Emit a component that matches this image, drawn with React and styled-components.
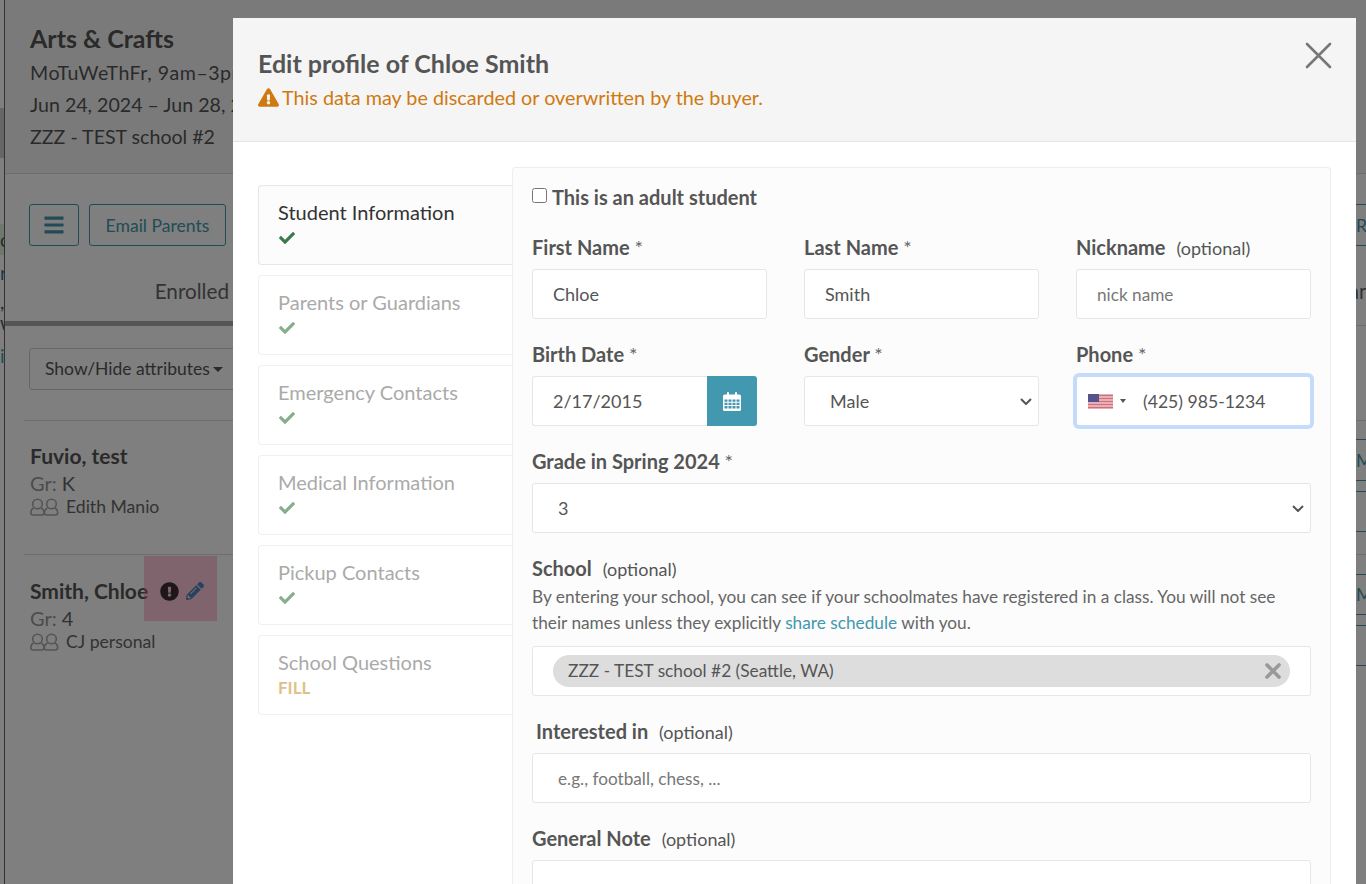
import React from 'react';
import styled, { createGlobalStyle } from 'styled-components';
import { FaBars, FaCheck, FaExclamationCircle, FaExclamationTriangle, FaPencilAlt } from 'react-icons/fa';

const Global = createGlobalStyle`
  html, body { margin: 0; padding: 0; background: #fff; }
  * { box-sizing: border-box; }
  body { font-family: Lato, "Open Sans", sans-serif; color: #555; }
`;

const Viewport = styled.div`
  position: relative;
  width: 1366px;
  height: 884px;
  overflow: hidden;
`;
const Page = styled.div`
  display: flex;
  width: 1440px;
  min-height: 884px;
  background: #fff;
`;
const Strip = styled.div`
  width: 5px;
  flex: none;
  border-right: 1px solid #666;
  display: flex;
  flex-direction: column;
  font-size: 19px;
  line-height: 20px;
  overflow: hidden;
`;
const StripBlock = styled.div`
  height: ${p => p.$h}px;
  background: ${p => p.$bg || 'transparent'};
  color: ${p => p.$color || '#555'};
  overflow: hidden;
  white-space: nowrap;
  display: flex;
  align-items: center;
`;
const Main = styled.div`
  flex: 1;
  min-width: 0;
`;
const CourseHeader = styled.header`
  height: 174px;
  padding: 21px 0 0 25px;
  background: #f5f5f5;
  border-bottom: 1px solid #ddd;
`;
const CourseTitle = styled.h2`
  margin: 0 0 2px;
  font-size: 25px;
  line-height: 34px;
  font-weight: 700;
  color: #555;
`;
const CourseLine = styled.div`
  font-size: 19.6px;
  line-height: 32px;
  letter-spacing: ${p => p.$spacing || 0}px;
  color: #555;
  white-space: nowrap;
`;
const Toolbar = styled.div`
  display: flex;
  gap: 10px;
  margin-top: 30px;
  padding-left: 24px;
`;
const OutlineButton = styled.button`
  height: ${p => p.$h || 42}px;
  width: ${p => p.$w}px;
  padding: ${p => (p.$left ? '0 0 0 15px' : '0')};
  margin-left: ${p => (p.$left ? 'auto' : '0')};
  display: flex;
  align-items: center;
  justify-content: ${p => (p.$left ? 'flex-start' : 'center')};
  background: transparent;
  border: 1px solid #4298ae;
  border-radius: 3px;
  color: #4298ae;
  font: 400 17.6px Lato, sans-serif;
`;
const TabBar = styled.div`
  display: flex;
  height: 56px;
  margin-top: 24px;
  border-bottom: 1px solid #ddd;
  font-size: 20.7px;
  color: #666;
`;
const ActiveTab = styled.div`
  width: 240px;
  height: 56px;
  padding: 9px 16px 0 0;
  text-align: right;
  border-bottom: 5px solid #aaa;
`;
const OtherTab = styled.div`
  margin-left: auto;
  width: 105px;
  padding-top: 9px;
`;
const AttrButton = styled.button`
  display: flex;
  align-items: center;
  gap: 3px;
  width: 230px;
  height: 42px;
  margin: 22px 0 0 24px;
  padding: 0 15px 2px;
  background: #fff;
  border: 1px solid #ccc;
  border-radius: 3px;
  color: #555;
  font: 400 17.5px Lato, sans-serif;
  white-space: nowrap;
`;
const Caret = styled.span`
  display: inline-block;
  margin-top: 2px;
  border-top: 5px solid currentColor;
  border-left: 5px solid transparent;
  border-right: 5px solid transparent;
`;
const StudentList = styled.div`
  margin: 30px 0 0 19px;
`;
const StudentRow = styled.div`
  display: flex;
  justify-content: space-between;
  height: 134px;
  padding: ${p => p.$top}px 0 0 6px;
  border-top: 1px solid #ddd;
`;
const StudentInfo = styled.div`
  position: relative;
`;
const StudentName = styled.div`
  font-size: 21px;
  line-height: 28px;
  font-weight: 700;
  color: #555;
  white-space: nowrap;
`;
const Grade = styled.div`
  font-size: 20px;
  line-height: 26px;
  color: #666;
  span { color: #999; }
`;
const Contact = styled.div`
  display: flex;
  align-items: center;
  gap: 7px;
  font-size: 17.6px;
  line-height: 22px;
  color: #666;
`;
const FlagBadge = styled.div`
  position: absolute;
  left: 114px;
  top: -21px;
  width: 73px;
  height: 65px;
  padding-top: 26px;
  padding-left: 16px;
  display: flex;
  align-items: flex-start;
  gap: 7px;
  background: rgba(255, 100, 150, 0.35);
  color: #3a2c35;
  font-size: 19px;
  svg + svg { color: #4a86b8; font-size: 18px; }
`;
const Actions = styled.div`
  display: flex;
  flex-direction: column;
  gap: 10px;
  margin-top: -3px;
`;

const Overlay = styled.div`
  position: absolute;
  inset: 0;
  background: rgba(0, 0, 0, 0.5);
`;
const Modal = styled.div`
  position: absolute;
  left: 233px;
  top: 18px;
  width: 1123px;
  height: 900px;
  background: #fff;
  overflow: hidden;
`;
const ModalHeader = styled.div`
  position: relative;
  height: 124px;
  padding: 27px 25px 0;
  background: #f5f5f5;
  border-bottom: 1px solid #e5e5e5;
`;
const ModalTitle = styled.h1`
  margin: 0;
  font-size: 25px;
  line-height: 36px;
  font-weight: 700;
  color: #555;
`;
const Warning = styled.div`
  display: flex;
  align-items: center;
  gap: 3px;
  height: 30px;
  margin-top: 1px;
  font-size: 19.8px;
  color: #cf7a10;
  svg { font-size: 21px; flex: none; }
`;
const CloseButton = styled.button`
  position: absolute;
  right: 24px;
  top: 24px;
  width: 27px;
  height: 27px;
  padding: 0;
  border: 0;
  background: none;
  color: #777;
  svg { display: block; }
`;
const ModalBody = styled.div`
  display: flex;
  padding: 25px 25px 0;
`;
const StepNav = styled.nav`
  width: 255px;
  flex: none;
  margin-top: 18px;
  display: flex;
  flex-direction: column;
  gap: 10px;
`;
const Step = styled.div`
  height: 80px;
  padding: 13px 19px 0;
  border: 1px solid ${p => (p.$active ? '#e6e6e6' : '#f0f0f0')};
  border-right: 0;
  border-radius: 4px 0 0 4px;
  background: ${p => (p.$active ? '#fcfcfc' : '#fff')};
`;
const StepTitle = styled.div`
  font-size: 20px;
  line-height: 26px;
  color: ${p => (p.$active ? '#333' : '#aaa')};
  white-space: nowrap;
`;
const StepStatus = styled.div`
  padding-top: 2px;
  font-size: 17px;
  line-height: 22px;
  font-weight: 700;
  color: ${p => (p.$fill ? '#dfc08c' : p.$active ? '#3c7a4d' : '#86ae8c')};
  svg { display: block; margin-top: 3px; margin-left: 1px; }
`;
const FormPanel = styled.form`
  position: relative;
  flex: 1;
  min-width: 0;
  margin-left: -1px;
  padding: 15px 19px 0;
  background: #fcfcfc;
  border: 1px solid #eee;
  border-bottom: 0;
  border-radius: 4px 4px 0 0;
  display: flex;
  flex-direction: column;
  gap: 22px;
`;
const AdultRow = styled.label`
  display: flex;
  align-items: center;
  gap: 5px;
  height: 28px;
  margin-bottom: 1px;
  padding-bottom: 1px;
  font-size: 20px;
  font-weight: 700;
  color: #555;
  input { width: 15px; height: 15px; margin: 0 0 3px; }
`;
const Row3 = styled.div`
  display: grid;
  grid-template-columns: repeat(3, 235px);
  column-gap: 37px;
`;
const Field = styled.div``;
const Label = styled.div`
  height: 28px;
  margin-bottom: ${p => (p.$tight ? 1 : 7)}px;
  padding-left: ${p => (p.$inset ? 4 : 0)}px;
  font-size: 20px;
  line-height: 27px;
  font-weight: 700;
  color: #555;
  white-space: nowrap;
`;
const Req = styled.span`
  font-weight: 400;
  color: #666;
`;
const Optional = styled.span`
  margin-left: 6px;
  font-size: 18px;
  font-weight: 400;
  color: #555;
`;
const boxCss = `
  display: block;
  width: 100%;
  height: 50px;
  background-color: #fff;
  border: 1px solid #e6e6e6;
  border-radius: 3px;
  font: 400 18px Lato, sans-serif;
  color: #555;
  outline: none;
`;
const TextInput = styled.input`
  ${boxCss}
  padding: 0 ${p => p.$pad || 20}px;
  &::placeholder { color: #777; opacity: 1; font-size: 17.2px; }
`;
const chevron = encodeURIComponent(
  '<svg xmlns="http://www.w3.org/2000/svg" width="12" height="7" viewBox="0 0 12 7"><path d="M1 1l5 5 5-5" fill="none" stroke="#555" stroke-width="2"/></svg>'
);
const Select = styled.select`
  ${boxCss}
  appearance: none;
  padding: 0 0 0 ${p => p.$pad}px;
  background-image: url("data:image/svg+xml,${chevron}");
  background-repeat: no-repeat;
  background-position: right 6px center;
`;
const DateGroup = styled.div`
  display: flex;
  width: 225px;
`;
const DateInput = styled(TextInput)`
  border-right: 0;
  border-radius: 3px 0 0 3px;
  flex: 1;
  min-width: 0;
`;
const DateButton = styled.button`
  width: 50px;
  height: 50px;
  flex: none;
  padding: 0;
  border: 0;
  border-radius: 0 3px 3px 0;
  background: #4298ae;
  display: flex;
  align-items: center;
  justify-content: center;
`;
const PhoneBox = styled.div`
  display: flex;
  align-items: center;
  height: 50px;
  padding-left: 11px;
  background: #fff;
  border: 1px solid #c4dbfb;
  border-radius: 3px;
  box-shadow: 0 0 0 3px #c4dbfb;
  svg { display: block; flex: none; }
`;
const PhoneCaret = styled.span`
  margin-left: 7px;
  flex: none;
  border-top: 4px solid #555;
  border-left: 3px solid transparent;
  border-right: 3px solid transparent;
`;
const PhoneInput = styled.input`
  flex: 1;
  min-width: 0;
  margin-left: 15px;
  border: 0;
  outline: 0;
  background: none;
  font: 400 17.6px Lato, sans-serif;
  color: #555;
`;
const Help = styled.p`
  margin: 0 0 10px;
  font-size: 17.25px;
  line-height: 26px;
  color: #666;
  a { color: #4298ae; text-decoration: none; }
`;
const TagBox = styled.div`
  height: 50px;
  padding: 8px 20px;
  background: #fff;
  border: 1px solid #e6e6e6;
  border-radius: 3px;
`;
const Tag = styled.div`
  display: flex;
  align-items: center;
  justify-content: space-between;
  height: 32px;
  padding: 0 8px 2px 15px;
  border-radius: 16px;
  background: #ddd;
  font-size: 17.3px;
  color: #555;
  svg { display: block; margin-top: 2px; }
`;

const PeopleIcon = () => (
  <svg width="29" height="18" viewBox="0 0 29 18" fill="none" stroke="#aaa" strokeWidth="1.600">
    <circle cx="7.500" cy="6" r="4.800" />
    <circle cx="21.500" cy="6" r="4.800" />
    <path d="M3.500 10c-2 1-2.700 2.500-2.700 4.500 0 1.500 1 2.500 2.500 2.500h8.400c1.500 0 2.300-1 2.300-2.500 0-2-.9-3.500-2.800-4.500" />
    <path d="M17.500 10c-2 1-3.200 2.500-3.200 4.500 0 1.500 1 2.500 2.500 2.500h8.400c1.500 0 2.500-1 2.500-2.500 0-2-.9-3.500-2.700-4.500" />
  </svg>
);
const CloseIcon = () => (
  <svg width="27" height="27" viewBox="0 0 27 27" stroke="currentColor" strokeWidth="2.600" strokeLinecap="round">
    <path d="M2 2l23 23M25 2L2 25" />
  </svg>
);
const SmallX = () => (
  <svg width="18" height="18" viewBox="0 0 18 18" stroke="#999" strokeWidth="3.600" strokeLinecap="round">
    <path d="M3 3l12 12M15 3L3 15" />
  </svg>
);
const CalendarIcon = () => (
  <svg width="18" height="19" viewBox="0 0 18 19" fill="#fff">
    <path fillRule="evenodd" d="M1.500 2.500H4V1a1 1 0 0 1 2 0v1.500h6V1a1 1 0 0 1 2 0v1.500h2.500A1.500 1.500 0 0 1 18 4v13.500a1.500 1.500 0 0 1-1.500 1.500h-15A1.500 1.500 0 0 1 0 17.500V4a1.500 1.500 0 0 1 1.500-1.500zM1.500 7.500v2.200h3V7.500zm4 0v2.200h3V7.500zm4 0v2.200h3V7.500zm4 0v2.200h3V7.500zm-12 3.200v2.400h3v-2.400zm4 0v2.400h3v-2.400zm4 0v2.400h3v-2.400zm4 0v2.400h3v-2.400zm-12 3.400v2.400h3v-2.400zm4 0v2.400h3v-2.400zm4 0v2.400h3v-2.400zm4 0v2.400h3v-2.400z" />
  </svg>
);
const UsFlag = () => (
  <svg width="25" height="15" viewBox="0 0 25 15">
    <rect width="25" height="15" fill="#e8b0b6" />
    <path d="M0 1.500h25M0 4.500h25M0 7.500h25M0 10.500h25M0 13.500h25" stroke="#d0707e" strokeWidth="1.200" />
    <rect width="11" height="8" fill="#54548c" />
  </svg>
);

const steps = [
  { title: 'Student Information', active: true },
  { title: 'Parents or Guardians' },
  { title: 'Emergency Contacts' },
  { title: 'Medical Information' },
  { title: 'Pickup Contacts' },
  { title: 'School Questions', fill: true },
];

export default function App() {
  return (
    <Viewport>
      <Global />
      <Page>
        <Strip>
          <StripBlock $h={108} />
          <StripBlock $h={50} $bg="#ccc" />
          <StripBlock $h={66} />
          <StripBlock $h={31} $bg="#dff0d8">c</StripBlock>
          <StripBlock $h={36} $color="#3d6f9a">r</StripBlock>
          <StripBlock $h={22}>,</StripBlock>
          <StripBlock $h={20}>w</StripBlock>
          <StripBlock $h={12} />
          <StripBlock $h={22} $color="#4298ae">i</StripBlock>
        </Strip>
        <Main>
          <CourseHeader>
            <CourseTitle>Arts &amp; Crafts</CourseTitle>
            <CourseLine $spacing={0.5}>MoTuWeThFr, 9am–3pm</CourseLine>
            <CourseLine>Jun 24, 2024 – Jun 28, 2024</CourseLine>
            <CourseLine>ZZZ - TEST school #2</CourseLine>
          </CourseHeader>
          <Toolbar>
            <OutlineButton type="button" $w={50}><FaBars size={22} /></OutlineButton>
            <OutlineButton type="button" $w={137}>Email Parents</OutlineButton>
            <OutlineButton type="button" $w={100} $left>Roster</OutlineButton>
          </Toolbar>
          <TabBar>
            <ActiveTab>Enrolled</ActiveTab>
            <OtherTab>Canceled</OtherTab>
          </TabBar>
          <AttrButton type="button">Show/Hide attributes<Caret /></AttrButton>
          <StudentList>
            <StudentRow $top={21}>
              <StudentInfo>
                <StudentName>Fuvio, test</StudentName>
                <Grade><span>Gr:</span> K</Grade>
                <Contact><PeopleIcon />Edith Manio</Contact>
              </StudentInfo>
              <Actions>
                <OutlineButton type="button" $w={100} $left>Manage</OutlineButton>
                <OutlineButton type="button" $w={100} $left $h={41} />
              </Actions>
            </StudentRow>
            <StudentRow $top={22}>
              <StudentInfo>
                <StudentName>Smith, Chloe</StudentName>
                <FlagBadge><FaExclamationCircle /><FaPencilAlt /></FlagBadge>
                <Grade><span>Gr:</span> 4</Grade>
                <Contact><PeopleIcon />CJ personal</Contact>
              </StudentInfo>
              <Actions>
                <OutlineButton type="button" $w={100} $left $h={41}>Manage</OutlineButton>
                <OutlineButton type="button" $w={100} $left $h={41} />
              </Actions>
            </StudentRow>
          </StudentList>
        </Main>
      </Page>
      <Overlay />
      <Modal>
        <ModalHeader>
          <ModalTitle>Edit profile of Chloe Smith</ModalTitle>
          <Warning><FaExclamationTriangle />This data may be discarded or overwritten by the buyer.</Warning>
          <CloseButton type="button" aria-label="Close"><CloseIcon /></CloseButton>
        </ModalHeader>
        <ModalBody>
          <StepNav>
            {steps.map(s => (
              <Step key={s.title} $active={s.active}>
                <StepTitle $active={s.active}>{s.title}</StepTitle>
                <StepStatus $active={s.active} $fill={s.fill}>
                  {s.fill ? 'FILL' : <FaCheck size={16} />}
                </StepStatus>
              </Step>
            ))}
          </StepNav>
          <FormPanel>
            <AdultRow><input type="checkbox" />This is an adult student</AdultRow>
            <Row3>
              <Field>
                <Label>First Name <Req>*</Req></Label>
                <TextInput defaultValue="Chloe" />
              </Field>
              <Field>
                <Label>Last Name <Req>*</Req></Label>
                <TextInput defaultValue="Smith" />
              </Field>
              <Field>
                <Label>Nickname <Optional>(optional)</Optional></Label>
                <TextInput placeholder="nick name" />
              </Field>
            </Row3>
            <Row3>
              <Field>
                <Label>Birth Date <Req>*</Req></Label>
                <DateGroup>
                  <DateInput defaultValue="2/17/2015" />
                  <DateButton type="button" aria-label="Pick date"><CalendarIcon /></DateButton>
                </DateGroup>
              </Field>
              <Field>
                <Label>Gender <Req>*</Req></Label>
                <Select defaultValue="Male" $pad={25}><option>Male</option><option>Female</option></Select>
              </Field>
              <Field>
                <Label>Phone <Req>*</Req></Label>
                <PhoneBox>
                  <UsFlag /><PhoneCaret />
                  <PhoneInput defaultValue="(425) 985-1234" />
                </PhoneBox>
              </Field>
            </Row3>
            <Field>
              <Label>Grade in Spring 2024 <Req>*</Req></Label>
              <Select defaultValue="3" $pad={25}><option>K</option><option>1</option><option>2</option><option>3</option><option>4</option></Select>
            </Field>
            <Field>
              <Label $tight>School <Optional>(optional)</Optional></Label>
              <Help>
                By entering your school, you can see if your schoolmates have registered in a class. You will not see
                their names unless they explicitly <a href="#share">share schedule</a> with you.
              </Help>
              <TagBox>
                <Tag>ZZZ - TEST school #2 (Seattle, WA)<SmallX /></Tag>
              </TagBox>
            </Field>
            <Field>
              <Label $inset>Interested in <Optional>(optional)</Optional></Label>
              <TextInput placeholder="e.g., football, chess, ..." $pad={25} />
            </Field>
            <Field>
              <Label>General Note <Optional>(optional)</Optional></Label>
              <TextInput />
            </Field>
          </FormPanel>
        </ModalBody>
      </Modal>
    </Viewport>
  );
}
